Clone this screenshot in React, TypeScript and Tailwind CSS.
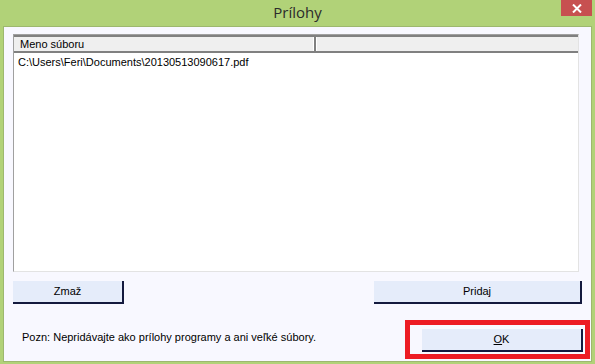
import React from 'react';

export default function App() {
  return (
    <div className="relative w-[595px] h-[364px] bg-[#b1d278] flex flex-col overflow-hidden" style={{ fontFamily: '"Liberation Sans", Arial, sans-serif' }}>
      {/* TITLE BAR */}
      <div className="h-[26px] shrink-0 flex items-center justify-center">
        <span className="text-[15px] text-[#2b2b2b] leading-none pb-[1px]" style={{ fontFamily: '"Open Sans", "Noto Sans", sans-serif' }}>
          Prílohy
        </span>
      </div>
      <button className="absolute top-0 right-[3px] w-[31px] h-[16px] bg-[#c75050] flex items-center justify-center">
        <svg width="10" height="9" viewBox="0 0 10 9">
          <path d="M1 0.5 L9 8.5 M9 0.5 L1 8.5" stroke="#fff" strokeWidth="2" />
        </svg>
      </button>

      {/* CLIENT AREA */}
      <div className="ml-[3px] mr-[3px] mb-[2px] flex-1 bg-[#f8f8ff] border border-[#9db86f] flex flex-col">
        {/* LIST */}
        <div className="ml-[9px] mt-[7px] w-[566px] h-[238px] bg-white border-l border-t border-[#a0a0a0] border-r-[#e3e3e3] border-b-[#e3e3e3] border-r border-b flex flex-col">
          <div className="h-[18px] flex border-t-2 border-b-2 border-[#808080] bg-[#efefef] text-[11px] text-black">
            <div className="w-[302px] px-[6px] flex items-center border-r-2 border-[#808080] shadow-[inset_-1px_0_0_#fff]">
              Meno súboru
            </div>
            <div className="flex-1 shadow-[inset_1px_0_0_#fff]"></div>
          </div>
          <div className="px-[4px] pt-[2px] text-[11px] text-black leading-[14px]">
            C:\Users\Feri\Documents\20130513090617.pdf
          </div>
        </div>

        {/* BUTTONS */}
        <div className="mt-[9px] flex">
          <button className="ml-[9px] w-[111px] h-[23px] bg-[#e5ecfa] border-r-2 border-b-2 border-[#141a3e] text-[11px] font-normal text-black flex items-center justify-center">
            Zmaž
          </button>
          <button className="ml-auto mr-[9px] w-[208px] h-[23px] bg-[#e5ecfa] border-r-2 border-b-2 border-[#141a3e] text-[11px] font-normal text-black flex items-center justify-center">
            Pridaj
          </button>
        </div>

        {/* BOTTOM */}
        <div className="mt-[16px] flex items-start">
          <div className="ml-[18px] mt-[10px] text-[11px] text-black leading-[14px]">
            Pozn: Nepridávajte ako prílohy programy a ani veľké súbory.
          </div>
          <div className="ml-auto mr-[1px] w-[185px] h-[39px] border-[5px] border-[#ed1c24] flex items-start pt-[4px] pl-[12px]">
            <button className="w-[161px] h-[23px] bg-[#e5ecfa] border-r-2 border-b-2 border-[#141a3e] text-[11px] font-normal text-black flex items-center justify-center">
              <span><span className="underline">O</span>K</span>
            </button>
          </div>
        </div>
      </div>
    </div>
  );
}
